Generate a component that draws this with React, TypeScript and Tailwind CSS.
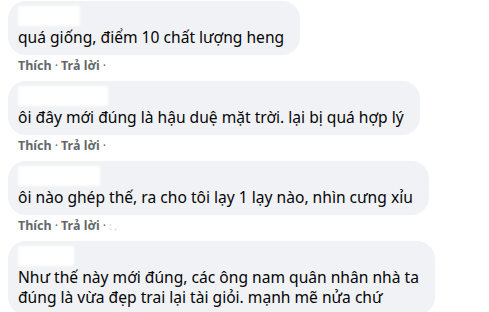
import React from "react"

type Comment = {
  nameWidth: number
  lines: string[]
  extra?: boolean
  showActions: boolean
}

const comments: Comment[] = [
  { nameWidth: 62, lines: ["quá giống, điểm 10 chất lượng heng"], showActions: true },
  { nameWidth: 90, lines: ["ôi đây mới đúng là hậu duệ mặt trời. lại bị quá hợp lý"], showActions: true },
  { nameWidth: 82, lines: ["ôi nào ghép thế, ra cho tôi lạy 1 lạy nào, nhìn cưng xỉu"], showActions: true, extra: true },
  {
    nameWidth: 56,
    lines: ["Như thế này mới đúng, các ông nam quân nhân nhà ta", "đúng là vừa đẹp trai lại tài giỏi. mạnh mẽ nửa chứ"],
    showActions: false,
  },
]

export default function App() {
  return (
    <div
      className="h-[312px] w-[489px] overflow-hidden bg-white pl-2 pt-px text-[#050505]"
      style={{ fontFamily: '"Noto Sans", "Open Sans", sans-serif' }}
    >
      {comments.map((c, i) => (
        <div key={i} className="mb-[9px]">
          <div className="inline-block rounded-[18px] bg-[#f0f2f5] pb-[8px] pl-[10px] pr-[16px] pt-[4px]">
            <div className="h-[22px] py-[1px]">
              <div className="h-[20px] bg-white blur-[1px]" style={{ width: c.nameWidth }} />
            </div>
            {c.lines.map((l, j) => (
              <div key={j} className="whitespace-nowrap text-[15.6px] leading-[20px]">
                {l}
              </div>
            ))}
          </div>
          {c.showActions && (
            <div className="mt-[5px] flex items-center pl-[10px] text-[12.5px] font-bold leading-[12px] text-[#65676b]">
              <span>Thích</span>
              <span className="mx-[3px] font-normal">·</span>
              <span>Trả lời</span>
              <span className="mx-[3px] font-normal">·</span>
              {c.extra && <span className="text-[10px] font-normal text-[#d0d3d8]">: ,</span>}
            </div>
          )}
        </div>
      ))}
    </div>
  )
}
